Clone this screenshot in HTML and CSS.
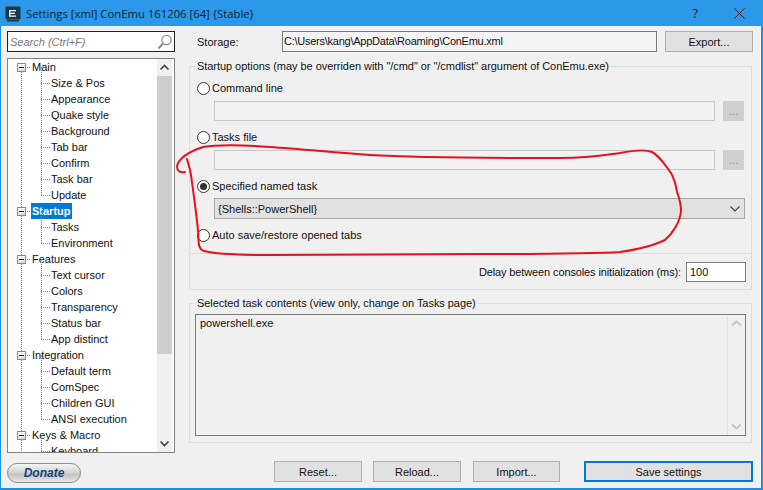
FILE: index.html
```html
<!DOCTYPE html>
<html lang="en">
<head>
<meta charset="utf-8">
<title>Settings</title>
<link rel="stylesheet" href="styles.css">
</head>
<body>
<div class="window">
  <header class="titlebar">
    <svg class="app-icon" width="16" height="16" viewBox="0 0 16 16"><rect x="0.5" y="0.5" width="15" height="13" rx="1" fill="#123a4a"/><rect x="2" y="14" width="12" height="1.5" fill="#123a4a"/><path d="M4 4h7v1.2H5.3v1.6H10V8H5.3v1.6H11v1.2H4z" fill="#fff"/></svg>
    <span class="title-text">Settings [xml] ConEmu 161206 [64] {Stable}</span>
    <span class="help">?</span>
    <svg class="close" width="11" height="11" viewBox="0 0 11 11"><path d="M0.5 0.5l10 10M10.5 0.5l-10 10" stroke="#10202c" fill="none"/></svg>
  </header>
  <div class="client">
    <aside class="sidebar">
      <div class="search">
        <span class="search-text">Search (Ctrl+F)</span>
        <svg width="16" height="16" viewBox="0 0 16 16"><circle cx="9.5" cy="6" r="4.6" fill="#fff" stroke="#8a8a8a" stroke-width="1.3"/><path d="M6 9.5L1.5 14.5" stroke="#8a8a8a" stroke-width="2"/></svg>
      </div>
      <div class="tree">
        <div class="tree-body">
          <div class="node"><div class="parent"><i class="exp"></i><span>Main</span></div>
            <div class="kids"><div class="kid">Size &amp; Pos</div><div class="kid">Appearance</div><div class="kid">Quake style</div><div class="kid">Background</div><div class="kid">Tab bar</div><div class="kid">Confirm</div><div class="kid">Task bar</div><div class="kid">Update</div></div></div>
          <div class="node"><div class="parent"><i class="exp"></i><span class="selected">Startup</span></div>
            <div class="kids"><div class="kid">Tasks</div><div class="kid">Environment</div></div></div>
          <div class="node"><div class="parent"><i class="exp"></i><span>Features</span></div>
            <div class="kids"><div class="kid">Text cursor</div><div class="kid">Colors</div><div class="kid">Transparency</div><div class="kid">Status bar</div><div class="kid">App distinct</div></div></div>
          <div class="node"><div class="parent"><i class="exp"></i><span>Integration</span></div>
            <div class="kids"><div class="kid">Default term</div><div class="kid">ComSpec</div><div class="kid">Children GUI</div><div class="kid">ANSI execution</div></div></div>
          <div class="node"><div class="parent"><i class="exp"></i><span>Keys &amp; Macro</span></div>
            <div class="kids"><div class="kid">Keyboard</div></div></div>
        </div>
        <div class="scrollbar">
          <svg width="15" height="17" viewBox="1 0 15 17"><path d="M4.5 10.5l4-4 4 4" fill="none" stroke="#404040" stroke-width="1.6"/></svg>
          <div class="thumb"></div>
          <div class="track"></div>
          <svg width="15" height="17" viewBox="1 0 15 17"><path d="M4.5 6.5l4 4 4-4" fill="none" stroke="#404040" stroke-width="1.6"/></svg>
        </div>
      </div>
      <button class="donate">Donate</button>
    </aside>
    <main class="content">
      <div class="storage-row">
        <span class="storage-label">Storage:</span>
        <div class="storage-field">C:\Users\kang\AppData\Roaming\ConEmu.xml</div>
        <button class="btn export">Export...</button>
      </div>
      <fieldset class="group startup">
        <legend>Startup options (may be overriden with "/cmd" or "/cmdlist" argument of ConEmu.exe)</legend>
        <div class="radio r1"><i class="dot"></i>Command line</div>
        <div class="field-row"><div class="disabled-field"></div><div class="dots-btn">...</div></div>
        <div class="radio r2"><i class="dot"></i>Tasks file</div>
        <div class="field-row"><div class="disabled-field"></div><div class="dots-btn">...</div></div>
        <div class="radio r3"><i class="dot on"></i>Specified named task</div>
        <div class="select"><span>{Shells::PowerShell}</span><svg width="10" height="6" viewBox="0 0 10 6"><path d="M0.5 0.5L5 5l4.5-4.5" fill="none" stroke="#404040" stroke-width="1.1"/></svg></div>
        <div class="radio r4"><i class="dot"></i>Auto save/restore opened tabs</div>
        <div class="delay-row"><span class="delay-label">Delay between consoles initialization (ms):</span><div class="delay-input">100</div></div>
      </fieldset>
      <fieldset class="group contents">
        <legend>Selected task contents (view only, change on Tasks page)</legend>
        <div class="memo">
          <div class="memo-text">powershell.exe</div>
          <div class="memo-scroll">
            <svg width="17" height="17" viewBox="0 0 17 17"><path d="M4 10.5l4.5-4 4.5 4" fill="none" stroke="#c4c4c4" stroke-width="1.8"/></svg>
            <svg width="17" height="17" viewBox="0 0 17 17"><path d="M4 6.5l4.5 4 4.5-4" fill="none" stroke="#c4c4c4" stroke-width="1.8"/></svg>
          </div>
        </div>
      </fieldset>
      <div class="actions">
        <button class="btn reset">Reset...</button>
        <button class="btn reload">Reload...</button>
        <button class="btn import">Import...</button>
        <button class="btn save">Save settings</button>
      </div>
    </main>
  </div>
  <svg class="scribble" width="763" height="490" viewBox="0 0 763 490"><path d="M185 172C180 173 177 171 177 166C179 158 188 152 203 147C220 144 245 145 270 147C300 149 330 152 370 155C420 158 500 158 560 158C590 158 605 155 620 153C635 150 645 149 652 152C660 156 665 165 671 173C675 180 676 186 677 192C680 200 681 205 681 211C680 222 673 233 665 240C655 245 640 249 620 252C590 254 540 254 480 254C400 254 330 255 270 255C240 255 215 254 204 251C197 249 199 240 198 230C196 210 193 190 191 175C190 168 188 163 187 159" fill="none" stroke="#e8101c" stroke-width="2" stroke-linecap="round" stroke-linejoin="round"/></svg>
</div>
</body>
</html>
```
FILE: styles.css
```css
* { box-sizing: border-box; }
html, body { margin: 0; padding: 0; }
body { width: 763px; height: 490px; overflow: hidden; font-family: "Liberation Sans", Arial, sans-serif; font-size: 11px; color: #111; }
.window { position: relative; width: 763px; height: 490px; background: #f0f0f0; border: solid #1a8fe3; border-width: 0 2px 2px 1px; display: flex; flex-direction: column; }
.titlebar { height: 26px; margin: 0 -2px 0 -1px; background: #2b98ea; display: flex; align-items: center; padding: 0 18px 0 5px; flex: none; }
.app-icon { flex: none; margin-top: 1px; }
.title-text { margin-left: 5px; font-family: "Open Sans", sans-serif; font-size: 11.3px; color: #0c2233; flex: 1; }
.help { font-family: "Open Sans", sans-serif; font-size: 13px; color: #10202c; margin-right: 36px; }
.client { flex: 1; display: flex; min-height: 0; }
.sidebar { width: 174px; margin-left: 6px; padding-top: 5px; display: flex; flex-direction: column; flex: none; }
.search { height: 21px; width: 168px; background: #fff; border: 1px solid #222; display: flex; align-items: center; justify-content: space-between; padding: 0 1px 0 2px; }
.search-text { font-style: italic; color: #777; }
.tree { height: 395px; width: 168px; margin-top: 6px; background: #fff; border: 1px solid #828282; display: flex; overflow: hidden; }
.tree-body { flex: 1; overflow: hidden; }
.node { position: relative; }
.node::before { content: ""; position: absolute; left: 13px; top: 13px; bottom: -4px; border-left: 1px dotted #808080; }
.parent { height: 16px; display: flex; align-items: center; position: relative; padding-left: 9px; }
.exp { width: 9px; height: 9px; border: 1px solid #8a8a8a; background: linear-gradient(#fff, #d8d8d8); position: relative; flex: none; margin-right: 1px; z-index: 1; }
.exp::after { content: ""; position: absolute; left: 1px; top: 3px; width: 5px; height: 1px; background: #222; }
.parent span { margin-left: 4px; padding: 0 1px; height: 16px; line-height: 16px; position: relative; }
.parent span::before { content: ""; position: absolute; left: -4px; top: 8px; width: 3px; border-top: 1px dotted #808080; }
.selected { background: #0078d7; color: #fff; font-weight: 700; }
.kids { position: relative; }
.kid { height: 16px; line-height: 16px; padding-left: 43px; position: relative; }
.kid::before { content: ""; position: absolute; left: 33px; top: -8px; height: 16px; border-left: 1px dotted #808080; }
.kid::after { content: ""; position: absolute; left: 33px; top: 8px; width: 9px; border-top: 1px dotted #808080; }
.scrollbar { width: 15px; flex: none; display: flex; flex-direction: column; background: #f0f0f0; margin-right: 2px; }
.scrollbar svg { flex: none; }
.thumb { height: 278px; background: #cdcdcd; flex: none; }
.track { flex: 1; }
.donate { width: 74px; height: 20px; margin-top: 10px; border: 1px solid #8f8f8f; border-radius: 10px; background: linear-gradient(#f4f4f4 0, #d6d6d6 45%, #c2c2c2 60%, #e8e8e8 100%); font: italic 700 12px "Liberation Sans", sans-serif; color: #12447c; padding: 0; }
.content { flex: 1; display: flex; flex-direction: column; padding: 5px 8px 0 8px; min-width: 0; }
.storage-row { display: flex; align-items: center; height: 21px; padding-left: 8px; flex: none; }
.storage-label { width: 85px; flex: none; }
.storage-field { width: 375px; height: 21px; background: #f4f4f4; border: 1px solid #7a7a7a; line-height: 19px; padding-left: 1px; letter-spacing: -0.25px; flex: none; }
.btn { background: #e1e1e1; border: 1px solid #adadad; font: 11px "Liberation Sans", sans-serif; color: #111; padding: 0; height: 21px; }
.export { width: 88px; height: 21px; margin-left: 8px; }
.group { margin: 0; padding: 0 5px; border: 1px solid #dcdcdc; min-width: 0; width: 563px; flex: none; }
.group legend { padding: 0 1px; margin-left: 1px; line-height: 13px; letter-spacing: -0.05px; }
.startup { margin-top: 8px; height: 230px; padding-top: 7px; }
.radio { height: 16px; display: flex; align-items: center; padding-left: 2px; }
.dot { width: 13px; height: 13px; border: 1px solid #333; border-radius: 50%; background: #fff; margin-right: 2px; flex: none; position: relative; }
.dot.on::after { content: ""; position: absolute; left: 2px; top: 2px; width: 7px; height: 7px; border-radius: 50%; background: #333; }
.r2 { margin-top: 8px; }
.r3 { margin-top: 8px; }
.r4 { margin-top: 8px; }
.field-row { display: flex; align-items: center; margin: 5px 0 0 19px; height: 20px; }
.disabled-field { width: 501px; height: 20px; background: #f2f2f2; border: 1px solid #c8c8c8; }
.dots-btn { width: 21px; height: 20px; margin-left: 8px; background: #cfcfcf; color: #8c8c8c; text-align: center; line-height: 20px; }
.select { margin: 4px 0 0 19px; width: 531px; height: 21px; background: #e1e1e1; border: 1px solid #a5a5a5; display: flex; align-items: center; justify-content: space-between; padding: 0 4px 0 3px; }
.delay-row { margin: 10px -5px 0; height: 36px; border-top: 1px solid #dcdcdc; display: flex; align-items: center; justify-content: flex-end; padding-right: 5px; }
.delay-label { letter-spacing: -0.12px; }
.delay-input { width: 60px; height: 20px; margin-left: 5px; background: #fff; border: 1px solid #7a7a7a; line-height: 18px; padding-left: 3px; }
.contents { margin-top: 7px; height: 146px; padding-top: 4px; }
.memo { width: 551px; height: 122px; border: 1px solid #7a7a7a; background: #f0f0f0; display: flex; justify-content: space-between; }
.memo-text { padding: 2px 4px; }
.memo-scroll { width: 18px; border-left: 1px solid #e2e2e2; display: flex; flex-direction: column; justify-content: space-between; }
.actions { display: flex; margin-top: 18px; padding-left: 85px; flex: none; }
.reset { width: 88px; }
.reload { width: 88px; margin-left: 11px; }
.import { width: 87px; margin-left: 12px; }
.save { width: 169px; margin-left: 24px; border: 2px solid #0078d7; }
.scribble { position: absolute; left: -1px; top: 0; pointer-events: none; }
```
